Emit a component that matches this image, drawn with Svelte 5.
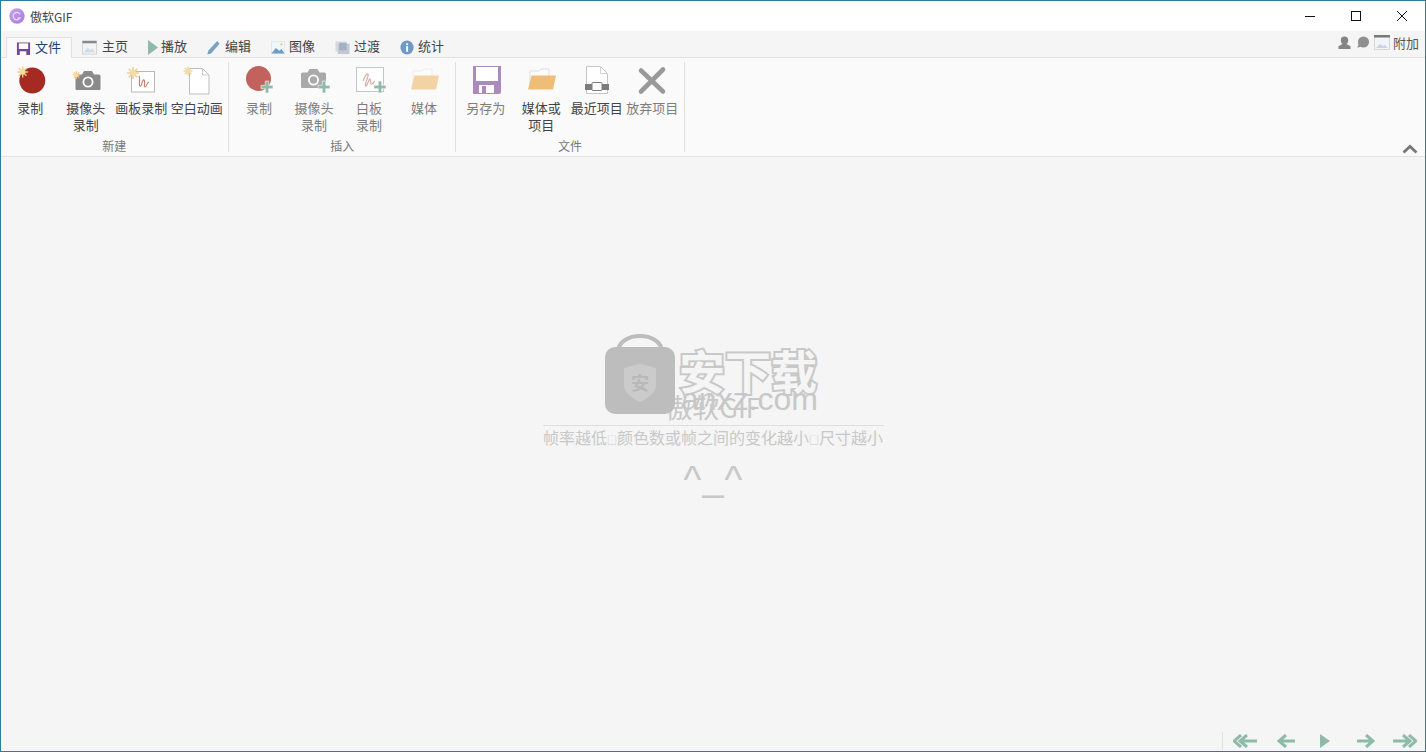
<script>
  const tabs = [
    { id: 'home', label: '主页' },
    { id: 'play', label: '播放' },
    { id: 'edit', label: '编辑' },
    { id: 'image', label: '图像' },
    { id: 'fade', label: '过渡' },
    { id: 'stats', label: '统计' }
  ];
  const groups = [
    { label: '新建', items: [
      { id: 'rec', text: '录制' },
      { id: 'cam', text: '摄像头\n录制' },
      { id: 'board', text: '画板录制' },
      { id: 'blank', text: '空白动画' }
    ]},
    { label: '插入', items: [
      { id: 'rec2', text: '录制', dim: true },
      { id: 'cam2', text: '摄像头\n录制', dim: true },
      { id: 'board2', text: '白板\n录制', dim: true },
      { id: 'folder2', text: '媒体', dim: true }
    ]},
    { label: '文件', items: [
      { id: 'save', text: '另存为', dim: true },
      { id: 'folder', text: '媒体或\n项目' },
      { id: 'recent', text: '最近项目' },
      { id: 'discard', text: '放弃项目', dim: true }
    ]}
  ];
</script>

{#snippet sparkle(x, y, r)}
  <g stroke="#eccb84" stroke-width={r > 5 ? 1.4 : 1.1}>
    <line x1={x - r} y1={y} x2={x + r} y2={y} />
    <line x1={x} y1={y - r} x2={x} y2={y + r} />
    <line x1={x - r * 0.7} y1={y - r * 0.7} x2={x + r * 0.7} y2={y + r * 0.7} />
    <line x1={x - r * 0.7} y1={y + r * 0.7} x2={x + r * 0.7} y2={y - r * 0.7} />
  </g>
  <circle cx={x} cy={y} r={r * 0.5} fill="#f3dca6" />
{/snippet}

{#snippet plus(x, y)}
  <path d="M{x - 1.7} {y - 6}h3.4v4.3h4.3v3.4h-4.3v4.3h-3.4v-4.3h-4.3v-3.4h4.3z" fill="#8fbcaa" stroke="#f9f9f9" stroke-width="0.6" />
{/snippet}

{#snippet camera(x, y, fill)}
  <path d="M{x} {y + 5}a1.5 1.5 0 0 1 1.5-1.5h5l2-3.5h8l2 3.5h5a1.5 1.5 0 0 1 1.5 1.5v13a1 1 0 0 1-1 1h-23a1 1 0 0 1-1-1z" fill={fill} />
  <circle cx={x + 12.5} cy={y + 11} r="4.6" fill="none" stroke="#fff" stroke-width="1.8" />
{/snippet}

{#snippet folderIcon(fill, back)}
  <path d="M5 25V7h9l2-2h8v8" fill="#fcfcfc" stroke={back} stroke-width="1" />
  <path d="M6.500 11.500H31l-3 14H3z" fill={fill} />
{/snippet}

{#snippet icon(id)}
  <svg class="big" viewBox="0 0 32 32" aria-hidden="true">
    {#if id === 'rec'}
      <circle cx="18.300" cy="16.500" r="13" fill="#a52a22" />
      {@render sparkle(8.700, 8, 5.500)}
    {:else if id === 'cam'}
      {@render camera(5.500, 7, '#8a8a8a')}
      {@render sparkle(6.500, 11, 3.800)}
    {:else if id === 'board'}
      <rect x="6.500" y="7.500" width="23" height="20.500" fill="#fff" stroke="#b9b9b9" />
      <path d="M14 12c2 3-1 9 1 10s2-7 4-6-1 7 1 7 1-4 4-5" fill="none" stroke="#c07c6a" stroke-width="1.100" />
      {@render sparkle(8, 9, 6)}
    {:else if id === 'blank'}
      <path d="M8.500 4.500h13l6.500 6.500v19H8.500z" fill="#fff" stroke="#bdbdbd" />
      <path d="M21.500 4.500v6.500H28" fill="none" stroke="#cfcfcf" />
      {@render sparkle(7, 7, 4.500)}
    {:else if id === 'rec2'}
      <circle cx="15.500" cy="14.500" r="12.500" fill="#c1625c" />
      {@render plus(24, 23)}
    {:else if id === 'cam2'}
      {@render camera(3, 5, '#a9a9a9')}
      {@render plus(26, 23)}
    {:else if id === 'board2'}
      <rect x="3.500" y="3.500" width="27" height="24" fill="#fff" stroke="#c2c8c4" />
      <path d="M10 17c3-8 6-9 5-5s-4 11-2 10 3-8 4-7 0 6 2 5 2-3 3-3" fill="none" stroke="#dba6a0" stroke-width="1.100" />
      {@render plus(27, 23)}
    {:else if id === 'folder2'}
      {@render folderIcon('#f3d3a4', '#ececec')}
    {:else if id === 'save'}
      <path d="M3 2h28v26a2 2 0 0 1-2 2H3z" fill="#ab8bbd" />
      <rect x="6" y="3" width="22" height="14" fill="#fff" />
      <rect x="9" y="21" width="15" height="8" fill="#fff" />
      <rect x="12" y="22" width="4" height="7" fill="#ab8bbd" />
    {:else if id === 'folder'}
      {@render folderIcon('#eebd78', '#dedede')}
    {:else if id === 'recent'}
      <path d="M5.500 2.500h14l7 7v20h-21z" fill="#fff" stroke="#c5c5c5" />
      <path d="M19.500 2.500v7h7" fill="none" stroke="#d3d3d3" />
      <rect x="4" y="20" width="24" height="6" fill="#7c7c7c" />
      <rect x="11" y="18.500" width="10" height="8" rx="1" fill="#fff" stroke="#7c7c7c" />
    {:else if id === 'discard'}
      <path d="M5 6.500l22 21M27 5.500L5 27.500" stroke="#999" stroke-width="4.600" stroke-linecap="round" fill="none" />
    {/if}
  </svg>
{/snippet}

{#snippet tabIcon(id)}
  <svg class="small {id}" viewBox="0 0 16 16" preserveAspectRatio="none" aria-hidden="true">
    {#if id === 'save'}
      <path d="M1 1.500h14v12.500a1 1 0 0 1-1 1H1z" fill="#6f4a92" />
      <rect x="3" y="2.500" width="10" height="6" fill="#fff" />
      <rect x="4" y="11" width="7" height="4" fill="#fff" />
    {:else if id === 'home'}
      <rect x="0.500" y="1" width="15" height="14" fill="#f1f3f4" stroke="#d2d2d2" />
      <rect x="0.500" y="1" width="15" height="2.500" fill="#8a8a8a" />
      <path d="M2 13l4-5 3 3 2-2 3 4z" fill="#cfdbe6" />
    {:else if id === 'play'}
      <path d="M0 0l16 8-16 8z" fill="#8fb9a8" />
    {:else if id === 'edit'}
      <path d="M0.500 15.500l1-4L12.500 1l3 3L5 14.500z" fill="#7ba2c6" />
    {:else if id === 'image'}
      <rect x="0.500" y="1.500" width="15" height="13" fill="#f1f6fa" stroke="#dfe6ec" />
      <path d="M0.500 14.500l5-6 4 3 2.500-2 3.500 5z" fill="#6e9cc0" />
      <circle cx="12" cy="4.500" r="1.300" fill="#efcf92" />
    {:else if id === 'fade'}
      <rect x="0.500" y="1.500" width="12" height="11" fill="#d5dbe3" />
      <rect x="3" y="4" width="12.500" height="11" fill="#c0c9d4" />
      <rect x="4.500" y="3" width="8" height="8" fill="#a5b1c0" />
    {:else if id === 'stats'}
      <circle cx="8" cy="8" r="7.500" fill="#6f9ac5" />
      <rect x="7" y="6.500" width="2.200" height="6" fill="#fff" />
      <rect x="7" y="3.500" width="2.200" height="2" fill="#fff" />
    {/if}
  </svg>
{/snippet}

<div class="window">
  <header class="titlebar">
    <svg class="logo" viewBox="0 0 16 16" aria-hidden="true">
      <defs>
        <linearGradient id="lg" x1="0" y1="0" x2="1" y2="1">
          <stop offset="0" stop-color="#c9a0ee" />
          <stop offset="1" stop-color="#a77be0" />
        </linearGradient>
      </defs>
      <circle cx="8" cy="8" r="7.700" fill="url(#lg)" />
      <path d="M11 6.200a3.700 3.700 0 1 0 0 3.800H8.500" fill="none" stroke="#ead9f8" stroke-width="1.300" />
    </svg>
    <span class="title">傲软GIF</span>
    <div class="controls">
      <svg viewBox="0 0 46 30" aria-hidden="true"><line x1="18" y1="15.500" x2="28" y2="15.500" stroke="#111" /></svg>
      <svg viewBox="0 0 46 30" aria-hidden="true"><rect x="18.500" y="10.500" width="9" height="9" fill="none" stroke="#111" /></svg>
      <svg viewBox="0 0 46 30" aria-hidden="true"><path d="M18 10l10 10M28 10L18 20" stroke="#111" fill="none" /></svg>
    </div>
  </header>

  <nav class="tabbar">
    <div class="tab active">{@render tabIcon('save')}<span>文件</span></div>
    {#each tabs as t}
      <div class="tab">{@render tabIcon(t.id)}<span>{t.label}</span></div>
    {/each}
    <div class="extras">
      <svg class="extra" viewBox="0 0 14 14" aria-hidden="true">
        <path d="M3 4.500a4 4 0 0 1 8 0c0 2-.8 3.300-1.800 4L13.500 11v3H.5v-3l4.300-2.500C3.800 7.800 3 6.500 3 4.500z" fill="#858585" />
      </svg>
      <svg class="extra chat" viewBox="0 0 14 14" aria-hidden="true">
        <circle cx="7.500" cy="6.500" r="6" fill="#8f8f8f" /><path d="M2 9l-1 4 4-2z" fill="#8f8f8f" />
      </svg>
      <svg class="extra wide" viewBox="0 0 16 15" aria-hidden="true">
        <rect x="0.500" y="0.500" width="15" height="14" fill="#f2f5f7" stroke="#d6d6d6" />
        <rect x="0" y="0" width="16" height="2.500" fill="#777" />
        <path d="M2 13l4-4 3 2 2-1 3 3z" fill="#c5d7e6" />
      </svg>
      <span>附加</span>
    </div>
  </nav>

  <section class="ribbon">
    {#each groups as g}
      <div class="group">
        <div class="buttons">
          {#each g.items as b}
            <div class="rbtn" class:dim={b.dim}>
              {@render icon(b.id)}
              <span class="lbl">{b.text}</span>
            </div>
          {/each}
        </div>
        <div class="glabel">{g.label}</div>
      </div>
    {/each}
    <svg class="collapse" viewBox="0 0 16 10" aria-hidden="true">
      <path d="M1.500 8.500L8 2.500l6.500 6" fill="none" stroke="#777" stroke-width="2.800" />
    </svg>
  </section>

  <main class="stage">
    <div class="message">
      <div class="appname">傲软GIF</div>
      <div class="hint">帧率越低<span class="tofu">□</span>颜色数或帧之间的变化越小<span class="tofu">□</span>尺寸越小</div>
      <div class="face"><span>^</span><span class="mouth">_</span><span>^</span></div>
    </div>

    <div class="watermark" aria-hidden="true">
      <svg class="bag" viewBox="0 0 70 80">
        <path d="M13 17C15 -3 55 -3 57 17" fill="none" stroke="#bdbdbd" stroke-width="4" />
        <rect x="0" y="13" width="70" height="67" rx="10" fill="#bdbdbd" />
        <path d="M35 30l16 4v17c0 8-8 13-16 17-8-4-16-9-16-17V34z" fill="#cbcbcb" />
        <text x="35" y="56" text-anchor="middle" class="badge">安</text>
      </svg>
      <div class="brand">
        <div class="cn">安下载</div>
        <div class="en">anxz.com</div>
      </div>
    </div>

    <div class="pager">
      <svg class="nav dbl" viewBox="0 0 24 14" aria-hidden="true"><path d="M24 7H9M14 1L7 7l7 6M8 1L1 7l7 6" fill="none" stroke="#8fb9a8" stroke-width="3" /></svg>
      <svg class="nav sgl back" viewBox="0 0 18 14" aria-hidden="true"><path d="M18 7H3M9 1L2 7l7 6" fill="none" stroke="#8fb9a8" stroke-width="3" /></svg>
      <svg class="nav tri" viewBox="0 0 10 14" aria-hidden="true"><path d="M0 0l10 7-10 7z" fill="#8fb9a8" /></svg>
      <svg class="nav sgl fwd" viewBox="0 0 18 14" aria-hidden="true"><path d="M0 7h15M9 1l7 6-7 6" fill="none" stroke="#8fb9a8" stroke-width="3" /></svg>
      <svg class="nav dbl last" viewBox="0 0 24 14" aria-hidden="true"><path d="M0 7h15M10 1l7 6-7 6M16 1l7 6-7 6" fill="none" stroke="#8fb9a8" stroke-width="3" /></svg>
    </div>
  </main>
</div>

<style>
  :global(body) {
    margin: 0;
    overflow: hidden;
  }
  .window {
    width: 1426px;
    height: 752px;
    box-sizing: border-box;
    border: 1px solid #2b7d9e;
    display: flex;
    flex-direction: column;
    background: #f5f5f5;
    font-family: "Noto Sans CJK SC", "Noto Sans", sans-serif;
    font-size: 13px;
    color: #444;
  }
  .titlebar {
    height: 30px;
    flex: none;
    display: flex;
    align-items: center;
    background: #fff;
    padding-left: 8px;
  }
  .logo {
    width: 16px;
    height: 16px;
    margin-right: 5px;
  }
  .title {
    color: #444;
    font-size: 12px;
  }
  .controls {
    margin-left: auto;
    display: flex;
  }
  .controls svg {
    width: 46px;
    height: 30px;
    display: block;
  }
  .tabbar {
    height: 27px;
    flex: none;
    box-sizing: border-box;
    display: flex;
    align-items: flex-end;
    padding-left: 5px;
    background: #f5f5f5;
    border-bottom: 1px solid #e1e1e1;
  }
  .tab {
    height: 20px;
    padding: 0 10px;
    display: flex;
    align-items: center;
    line-height: 20px;
  }
  .tab span {
    position: relative;
    top: -1px;
  }
  .tab.active {
    height: 21px;
    width: 66px;
    margin-bottom: -1px;
    box-sizing: border-box;
    padding: 0 0 0 9px;
    background: #fafafa;
    border: 1px solid #e1e1e1;
    border-bottom: none;
    color: #1d3f78;
  }
  .small {
    width: 15px;
    height: 15px;
    display: block;
    flex: none;
    margin-right: 4px;
  }
  .small.home {
    margin-right: 5px;
  }
  .small.play {
    width: 10px;
    margin-right: 3px;
  }
  .small.edit {
    width: 13px;
    margin-right: 5px;
  }
  .small.image,
  .small.stats {
    width: 14px;
  }
  .extras {
    margin-left: auto;
    margin-bottom: 3px;
    display: flex;
    align-items: center;
    gap: 5px;
    padding-right: 6px;
    align-self: center;
    color: #555;
  }
  .extra {
    width: 13px;
    height: 13px;
    display: block;
  }
  .extra.chat {
    width: 14px;
  }
  .extra.wide {
    width: 16px;
    height: 15px;
    margin-left: -1px;
    margin-right: -2px;
  }
  .ribbon {
    position: relative;
    height: 99px;
    flex: none;
    box-sizing: border-box;
    display: flex;
    background: #fafafa;
    border-bottom: 1px solid #e1e1e1;
    padding-top: 4px;
  }
  .group {
    width: 227px;
    height: 90px;
    box-sizing: border-box;
    padding: 2px 0 0 2px;
    border-right: 1px solid #dfdfdf;
    display: flex;
    flex-direction: column;
  }
  .group:first-child {
    width: 228px;
    padding-left: 1.500px;
  }
  .group:nth-child(2) {
    padding-left: 2.500px;
  }
  .group:nth-child(3) {
    width: 229px;
  }
  .buttons {
    display: flex;
    height: 74px;
    flex: none;
  }
  .rbtn {
    width: 55.500px;
    flex: none;
    display: flex;
    flex-direction: column;
    align-items: center;
  }
  .group:nth-child(2) .rbtn {
    width: 55px;
  }
  .big {
    width: 32px;
    height: 32px;
    display: block;
    flex: none;
    overflow: visible;
  }
  .lbl {
    display: block;
    white-space: pre-line;
    text-align: center;
    line-height: 17px;
    margin-top: 3px;
    color: #444;
    width: 60px;
  }
  .dim .lbl {
    color: #7d7d7d;
  }
  .glabel {
    flex: none;
    text-align: center;
    font-size: 12px;
    line-height: 16px;
    margin-left: -2px;
    color: #777;
  }
  .collapse {
    position: absolute;
    right: 7px;
    bottom: 2px;
    width: 16px;
    height: 10px;
  }
  .stage {
    position: relative;
    flex: 1;
    min-height: 0;
    display: flex;
    align-items: center;
    justify-content: center;
    padding-bottom: 11px;
  }
  .message {
    width: 341px;
    text-align: center;
    color: #c8c8c8;
  }
  .appname {
    font-size: 27px;
    line-height: 32px;
    padding-bottom: 2px;
    border-bottom: 1px solid #dedede;
  }
  .hint {
    font-size: 16px;
    line-height: 24px;
    margin-top: -1px;
    white-space: nowrap;
  }
  .tofu {
    font-size: 10px;
  }
  .face {
    display: flex;
    justify-content: center;
    gap: 1px;
    font-family: "Liberation Sans", sans-serif;
    font-size: 38px;
    line-height: 46px;
    height: 50px;
    margin-top: 5px;
  }
  .mouth {
    position: relative;
    top: -3px;
  }
  .watermark {
    position: absolute;
    left: 604px;
    top: 177px;
    display: flex;
    pointer-events: none;
  }
  .bag {
    width: 70px;
    height: 80px;
    display: block;
  }
  .badge {
    font-size: 18px;
    fill: #b8b8b8;
    font-weight: 700;
  }
  .brand {
    margin-left: 4px;
    padding-top: 12px;
    width: 139px;
  }
  .cn {
    font-size: 46px;
    line-height: 46px;
    font-weight: 700;
    color: #f5f5f5;
    -webkit-text-stroke: 4px #c8c8c8;
    paint-order: stroke fill;
    white-space: nowrap;
  }
  .en {
    font-family: "Liberation Sans", sans-serif;
    font-size: 32px;
    line-height: 26px;
    margin-top: -6px;
    color: #c8c8c8;
    text-align: right;
    white-space: nowrap;
  }
  .pager {
    position: absolute;
    right: 8px;
    bottom: 1px;
    height: 18px;
    display: flex;
    align-items: center;
    padding-left: 10px;
    border-left: 1px solid #e2e2e2;
  }
  .nav {
    height: 14px;
    display: block;
  }
  .dbl {
    width: 24px;
  }
  .sgl {
    width: 18px;
  }
  .tri {
    width: 10px;
    margin-left: 25px;
  }
  .back {
    margin-left: 20px;
  }
  .fwd {
    margin-left: 27px;
  }
  .last {
    margin-left: 18px;
  }
</style>
